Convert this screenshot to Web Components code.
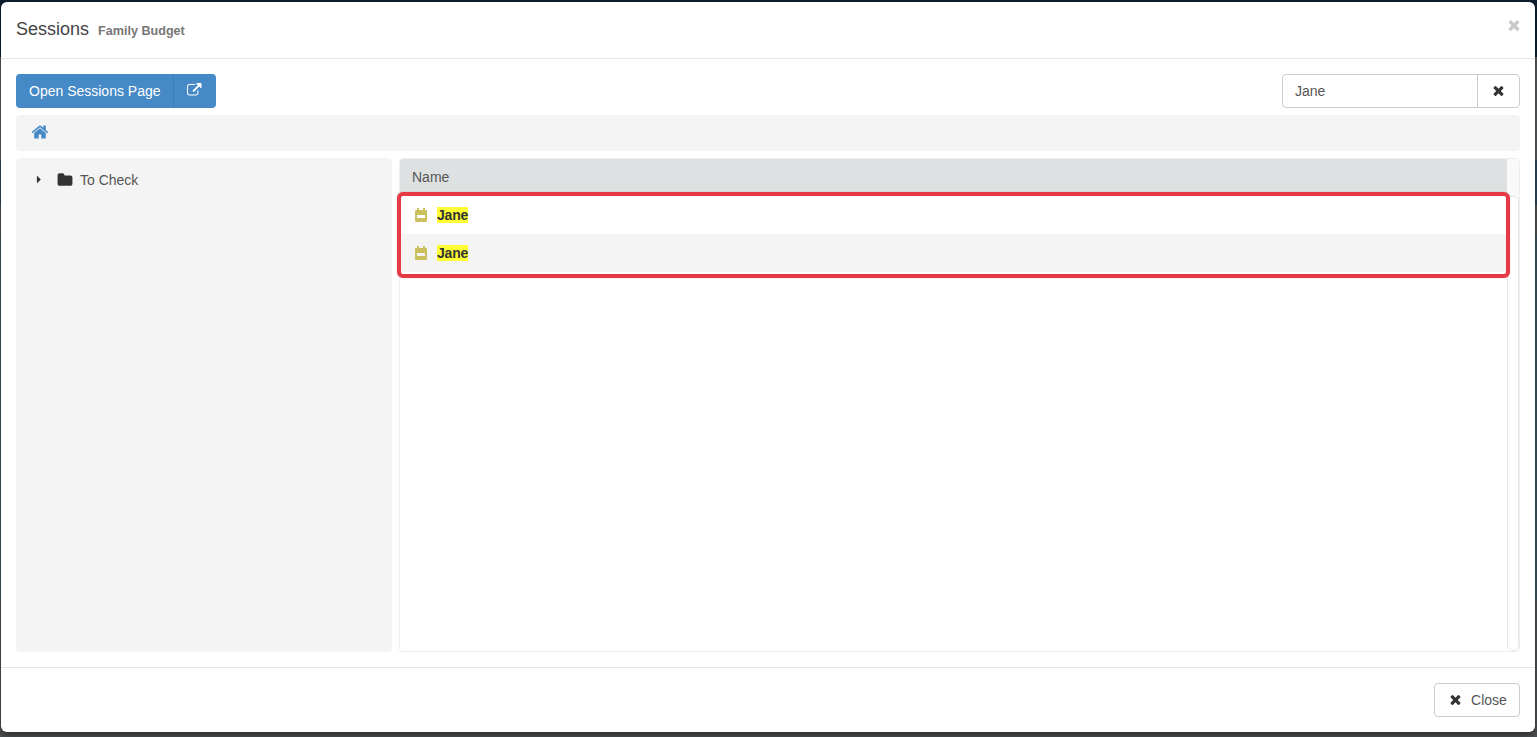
<!DOCTYPE html>
<html>
<head>
<meta charset="utf-8">
<title>Sessions</title>
<style>
  html, body { height: 100%; }
  body {
    margin: 0;
    height: 737px;
    overflow: hidden;
    box-sizing: border-box;
    padding: 2px 0 0 1px;
    font-family: "Liberation Sans", Arial, sans-serif;
    font-size: 14px;
    color: #333;
    background: linear-gradient(#0e2030 0, #0e2030 57px, #5a5c5e 57px, #5a5c5e 160px, #2e4a60 160px, #2e4a60 205px, #555 205px, #555 235px, #3f5560 235px, #3f5560 600px, #505254 600px, #505254 737px);
  }
</style>
</head>
<body>
<sess-dialog>
  <span slot="title">Sessions</span>
  <span slot="subtitle">Family Budget</span>

  <sess-toolbar>
    <sess-split-button slot="left" label="Open Sessions Page"></sess-split-button>
    <sess-search slot="right" value="Jane"></sess-search>
  </sess-toolbar>

  <sess-breadcrumb></sess-breadcrumb>

  <sess-browser>
    <sess-tree slot="tree" label="To Check"></sess-tree>
    <sess-grid slot="grid" heading="Name">
      <sess-row>Jane</sess-row>
      <sess-row alt>Jane</sess-row>
    </sess-grid>
  </sess-browser>

  <sess-button slot="footer">Close</sess-button>
</sess-dialog>

<script>
// font-awesome 4 shapes, inline because there is no network
const ICONS = {
  times: ['0 0 1408 1792', 'M1298 1322q0 40-28 68l-136 136q-28 28-68 28t-68-28l-294-294-294 294q-28 28-68 28t-68-28l-136-136q-28-28-28-68t28-68l294-294-294-294q-28-28-28-68t28-68l136-136q28-28 68-28t68 28l294 294 294-294q28-28 68-28t68 28l136 136q28 28 28 68t-28 68l-294 294 294 294q28 28 28 68z'],
  home: ['0 0 1792 1792', 'M1472 992v480q0 26-19 45t-45 19h-384v-384h-256v384h-384q-26 0-45-19t-19-45v-480q0-1 .5-3t.5-3l575-474 575 474q1 2 1 6zm223-69l-62 74q-8 9-21 11h-3q-13 0-21-7l-692-577-692 577q-12 8-24 7-13-2-21-11l-62-74q-8-10-7-23.5t11-21.5l719-599q32-26 76-26t76 26l244 204v-195q0-14 9-23t23-9h192q14 0 23 9t9 23v408l219 182q10 8 11 21.5t-7 23.5z'],
  folder: ['0 0 1792 1792', 'M1728 608v704q0 92-66 158t-158 66h-1216q-92 0-158-66t-66-158v-960q0-92 66-158t158-66h320q92 0 158 66t66 158v32h672q92 0 158 66t66 158z'],
  link: ['0 0 1792 1792', 'M1408 928v320q0 119-84.5 203.5t-203.5 84.5h-832q-119 0-203.5-84.5t-84.5-203.5v-832q0-119 84.5-203.5t203.5-84.5h704q14 0 23 9t9 23v64q0 14-9 23t-23 9h-704q-66 0-113 47t-47 113v832q0 66 47 113t113 47h832q66 0 113-47t47-113v-320q0-14 9-23t23-9h64q14 0 23 9t9 23zm384-864v512q0 26-19 45t-45 19-45-19l-176-176-652 652q-10 10-23 10t-23-10l-114-114q-10-10-10-23t10-23l652-652-176-176q-19-19-19-45t19-45 45-19h512q26 0 45 19t19 45z'],
  caret: ['0 0 1792 1792', 'M1152 896q0 26-19 45l-448 448q-19 19-45 19t-45-19-19-45v-896q0-26 19-45t45-19 45 19l448 448q19 19 19 45z'],
  calendar: ['0 0 12 14', 'M2 0h2v2h4V0h2v2h1q1 0 1 1v10q0 1-1 1H1q-1 0-1-1V3q0-1 1-1h1zM2 7v3h8V7z']
};

customElements.define('fa-icon', class extends HTMLElement {
  connectedCallback() {
    const icon = ICONS[this.getAttribute('name')];
    const size = this.getAttribute('size') || 14;
    this.attachShadow({mode: 'open'}).innerHTML = `
      <style>:host { display: inline-flex; align-items: center; justify-content: center; line-height: 0; } svg { display: block; }</style>
      <svg width="${size}" height="${size}" viewBox="${icon[0]}" fill="currentColor"><path d="${icon[1]}"/></svg>`;
  }
});

customElements.define('sess-dialog', class extends HTMLElement {
  connectedCallback() {
    this.attachShadow({mode: 'open'}).innerHTML = `
      <style>
        :host { display: flex; flex-direction: column; box-sizing: border-box; width: 1534px; height: 730px; background: #fff; border-radius: 6px; box-shadow: 0 3px 9px rgba(0,0,0,.5); }
        header { flex: none; height: 57px; box-sizing: border-box; border-bottom: 1px solid #e5e5e5; display: flex; align-items: center; padding: 0 15px; }
        .title { font-size: 18px; color: #444; position: relative; top: -1px; }
        .sub { font-size: 12.6px; font-weight: bold; color: #777; margin-left: 9px; position: relative; top: 1px; }
        .x { margin-left: auto; color: #c9c9c9; position: relative; top: -5px; right: -2px; }
        main { flex: 1; display: flex; flex-direction: column; padding: 15px; min-height: 0; }
        footer { flex: none; height: 65px; box-sizing: border-box; border-top: 1px solid #e5e5e5; display: flex; justify-content: flex-end; align-items: flex-start; padding: 15px; }
      </style>
      <header>
        <span class="title"><slot name="title"></slot></span>
        <span class="sub"><slot name="subtitle"></slot></span>
        <fa-icon class="x" name="times" size="16"></fa-icon>
      </header>
      <main><slot></slot></main>
      <footer><slot name="footer"></slot></footer>`;
  }
});

customElements.define('sess-toolbar', class extends HTMLElement {
  connectedCallback() {
    this.attachShadow({mode: 'open'}).innerHTML = `
      <style>:host { display: flex; justify-content: space-between; flex: none; height: 34px; margin-bottom: 7px; }</style>
      <slot name="left"></slot><slot name="right"></slot>`;
  }
});

customElements.define('sess-split-button', class extends HTMLElement {
  connectedCallback() {
    this.attachShadow({mode: 'open'}).innerHTML = `
      <style>
        :host { display: flex; height: 34px; background: #4589c7; color: #fff; border-radius: 4px; font-size: 14px; }
        .a { width: 158px; box-sizing: border-box; display: flex; align-items: center; padding-left: 13px; border-right: 1px solid #3d7db6; white-space: nowrap; }
        .b { width: 42px; display: flex; align-items: center; justify-content: center; }
        fa-icon { position: relative; top: -1px; left: -.5px; }
      </style>
      <div class="a">${this.getAttribute('label')}</div>
      <div class="b"><fa-icon name="link" size="14.5"></fa-icon></div>`;
  }
});

customElements.define('sess-search', class extends HTMLElement {
  connectedCallback() {
    this.attachShadow({mode: 'open'}).innerHTML = `
      <style>
        :host { display: flex; width: 238px; height: 34px; box-sizing: border-box; border: 1px solid #ccc; border-radius: 4px; background: #fff; font-size: 14px; }
        .v { flex: 1; display: flex; align-items: center; padding-left: 12px; color: #555; border-right: 1px solid #ccc; }
        .c { width: 41px; flex: none; display: flex; align-items: center; justify-content: center; color: #333; }
        fa-icon { position: relative; top: -1px; }
      </style>
      <div class="v">${this.getAttribute('value')}</div>
      <div class="c"><fa-icon name="times" size="15"></fa-icon></div>`;
  }
});

customElements.define('sess-breadcrumb', class extends HTMLElement {
  connectedCallback() {
    this.attachShadow({mode: 'open'}).innerHTML = `
      <style>
        :host { display: flex; align-items: center; flex: none; height: 36px; margin-bottom: 7px; padding-left: 15px; background: #f4f4f4; border-radius: 4px; color: #4589c7; }
        fa-icon { position: relative; top: -1px; }
      </style>
      <fa-icon name="home" size="18"></fa-icon>`;
  }
});

customElements.define('sess-browser', class extends HTMLElement {
  connectedCallback() {
    this.attachShadow({mode: 'open'}).innerHTML = `
      <style>
        :host { display: grid; grid-template-columns: 376px 1fr; gap: 7px; flex: 1; min-height: 0; }
      </style>
      <slot name="tree"></slot><slot name="grid"></slot>`;
  }
});

customElements.define('sess-tree', class extends HTMLElement {
  connectedCallback() {
    this.attachShadow({mode: 'open'}).innerHTML = `
      <style>
        :host { display: block; background: #f4f4f4; border-radius: 4px; font-size: 14px; color: #555; }
        .node { display: flex; align-items: center; height: 18px; margin-top: 13px; padding-left: 17px; }
        .caret { color: #333; width: 12px; position: relative; top: -1px; }
        .folder { color: #333; margin-left: 12px; margin-right: 7px; }
      </style>
      <div class="node">
        <fa-icon class="caret" name="caret" size="17"></fa-icon>
        <fa-icon class="folder" name="folder" size="16"></fa-icon>
        <span>${this.getAttribute('label')}</span>
      </div>`;
  }
});

customElements.define('sess-grid', class extends HTMLElement {
  connectedCallback() {
    this.attachShadow({mode: 'open'}).innerHTML = `
      <style>
        :host { display: flex; flex-direction: column; position: relative; box-sizing: border-box; border: 1px solid #eee; border-radius: 4px; background: #fff; font-size: 14px; }
        .head { display: flex; flex: none; height: 37px; }
        .name { flex: 1; background: #dee1e2; display: flex; align-items: center; padding: 0 0 2px 12px; color: #555; border-radius: 3px 0 0 0; }
        .corner { width: 12px; background: #f9f9f9; border-radius: 0 3px 0 0; flex: none; }
        .body { flex: 1; display: flex; min-height: 0; }
        .rows { flex: 1; }
        .track { width: 12px; flex: none; box-sizing: border-box; border: 1px solid #e6e6e6; border-radius: 0 5px 7px 7px; background: #fff; }
        /* red annotation box from the screenshot, sits on top of the rows */
        .mark { position: absolute; left: -3px; top: 33px; width: 1113px; height: 86px; box-sizing: border-box; border: 4px solid #e63946; border-radius: 6px; box-shadow: 0 0 1px rgba(120,40,40,.6); }
      </style>
      <div class="head"><div class="name">${this.getAttribute('heading')}</div><div class="corner"></div></div>
      <div class="body"><div class="rows"><slot></slot></div><div class="track"></div></div>
      <div class="mark"></div>`;
  }
});

customElements.define('sess-row', class extends HTMLElement {
  connectedCallback() {
    this.attachShadow({mode: 'open'}).innerHTML = `
      <style>
        :host { display: flex; align-items: center; height: 38px; padding-left: 13.5px; background: #fff; font-weight: bold; color: #333; font-size: 14px; }
        :host([alt]) { background: #f4f4f4; }
        fa-icon { color: #ccbf5e; margin-right: 9.5px; }
        mark { background: #ffff33; color: inherit; letter-spacing: -.2px; }
      </style>
      <fa-icon name="calendar" size="14"></fa-icon>
      <mark><slot></slot></mark>`;
  }
});

customElements.define('sess-button', class extends HTMLElement {
  connectedCallback() {
    this.attachShadow({mode: 'open'}).innerHTML = `
      <style>
        :host { display: flex; align-items: center; justify-content: center; gap: 9px; box-sizing: border-box; width: 86px; height: 34px; border: 1px solid #ccc; border-radius: 4px; background: #fff; font-size: 14px; color: #555; }
        fa-icon { color: #333; position: relative; top: -1px; left: 1px; }
      </style>
      <fa-icon name="times" size="15"></fa-icon><slot></slot>`;
  }
});
</script>
</body>
</html>
